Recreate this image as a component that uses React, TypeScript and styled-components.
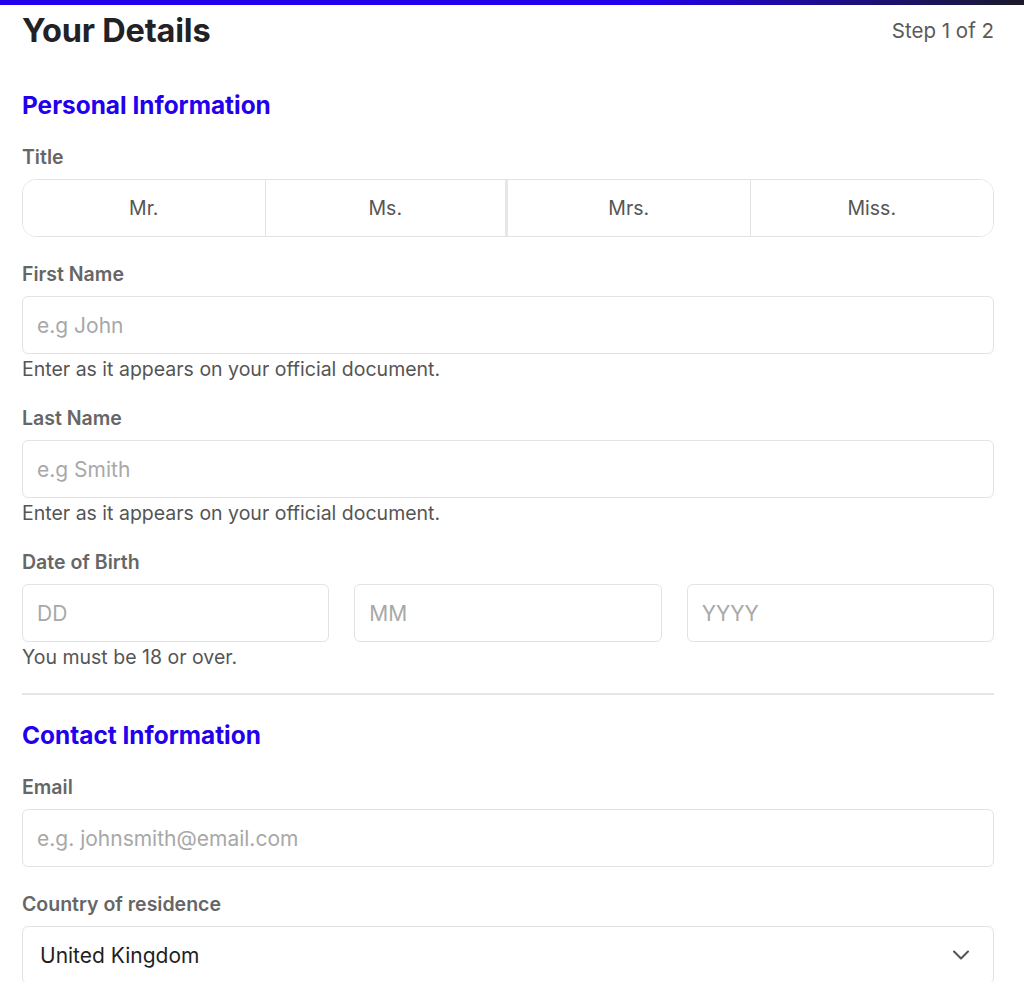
import styled, { createGlobalStyle } from "styled-components";
import { ChevronDown } from "lucide-react";

const TITLES = ["Mr.", "Ms.", "Mrs.", "Miss."];

function Field({ label, placeholder, hint }: { label: string; placeholder: string; hint?: string }) {
  return (
    <FieldGroup>
      <Label>{label}</Label>
      <Input placeholder={placeholder} />
      {hint && <Hint>{hint}</Hint>}
    </FieldGroup>
  );
}

export default function App() {
  return (
    <>
      <GlobalStyle />
      <TopBar />
      <Page>
        <Header>
          <PageTitle>Your Details</PageTitle>
          <Step>Step 1 of 2</Step>
        </Header>

        <Section $first>
          <SectionTitle>Personal Information</SectionTitle>
          <FieldGroup>
            <Label>Title</Label>
            <Segmented>
              {TITLES.map((t, i) => (
                <Segment key={t} $thick={i === 1} $last={i === TITLES.length - 1}>
                  {t}
                </Segment>
              ))}
            </Segmented>
          </FieldGroup>
          <Field label="First Name" placeholder="e.g John" hint="Enter as it appears on your official document." />
          <Field label="Last Name" placeholder="e.g Smith" hint="Enter as it appears on your official document." />
          <FieldGroup>
            <Label>Date of Birth</Label>
            <DateRow>
              <Input placeholder="DD" />
              <Input placeholder="MM" />
              <Input placeholder="YYYY" />
            </DateRow>
            <Hint>You must be 18 or over.</Hint>
          </FieldGroup>
        </Section>

        <Divider />

        <Section>
          <SectionTitle>Contact Information</SectionTitle>
          <Field label="Email" placeholder="e.g. johnsmith@email.com" />
          <FieldGroup>
            <Label>Country of residence</Label>
            <Select>
              <span>United Kingdom</span>
              <ChevronDown size={28} strokeWidth={1.8} color="#555" />
            </Select>
          </FieldGroup>
        </Section>
      </Page>
    </>
  );
}

const GlobalStyle = createGlobalStyle`
  body {
    margin: 0;
    background: #fff;
    font-family: Inter, "Noto Sans", sans-serif;
    color: #222;
  }
`;

const TopBar = styled.div`
  height: 5px;
  background: linear-gradient(90deg, #2200ee 0%, #2200ee 62%, #1a1a2a 100%);
`;

const Page = styled.div`
  padding: 0 30px 40px 22px;
  display: flex;
  flex-direction: column;
`;

const Header = styled.div`
  display: flex;
  justify-content: space-between;
  align-items: center;
  margin-top: 6px;
  height: 38px;
`;

const PageTitle = styled.h1`
  margin: 0;
  font-size: 32.5px;
  font-weight: 700;
  color: #222226;
  letter-spacing: -0.2px;
`;

const Step = styled.div`
  font-size: 20.5px;
  color: #5a5a5a;
`;

const Section = styled.section<{ $first?: boolean }>`
  display: flex;
  flex-direction: column;
  gap: 26px;
  margin-top: ${(p) => (p.$first ? "41px" : "0")};
`;

const SectionTitle = styled.h2`
  margin: 0;
  font-size: 24.4px;
  line-height: 30px;
  font-weight: 700;
  color: #2200ee;
`;

const FieldGroup = styled.div`
  display: flex;
  flex-direction: column;
`;

const Label = styled.label`
  font-size: 19.5px;
  line-height: 22px;
  font-weight: 600;
  color: #666;
  margin-bottom: 11px;
`;

const Input = styled.input`
  box-sizing: border-box;
  width: 100%;
  height: 58px;
  padding: 0 14px;
  border: 1.5px solid #e3e3e3;
  border-radius: 6px;
  font-family: inherit;
  font-size: 21px;
  color: #222;
  outline: none;
  &::placeholder {
    color: #a8a8a8;
  }
`;

const Hint = styled.div`
  margin-top: 4px;
  font-size: 19.5px;
  line-height: 23px;
  color: #555;
`;

const Segmented = styled.div`
  display: grid;
  grid-template-columns: repeat(4, 1fr);
  height: 58px;
  border: 1.5px solid #e3e3e3;
  border-radius: 14px;
  overflow: hidden;
  box-sizing: border-box;
`;

const Segment = styled.button<{ $thick?: boolean; $last?: boolean }>`
  border: none;
  background: #fff;
  border-right: ${(p) => (p.$last ? "none" : p.$thick ? "3px solid #e6e6e6" : "1.5px solid #e3e3e3")};
  font-family: inherit;
  font-size: 19.5px;
  color: #555;
  cursor: pointer;
`;

const DateRow = styled.div`
  display: grid;
  grid-template-columns: repeat(3, 1fr);
  gap: 25px;
`;

const Divider = styled.hr`
  border: none;
  border-top: 2px solid #e6e6e6;
  margin: 24px 0 25px;
`;

const Select = styled.div`
  box-sizing: border-box;
  height: 58px;
  display: flex;
  align-items: center;
  justify-content: space-between;
  padding: 0 18px 0 17px;
  border: 1.5px solid #e3e3e3;
  border-radius: 6px;
  font-size: 21px;
  color: #1f1f1f;
`;
